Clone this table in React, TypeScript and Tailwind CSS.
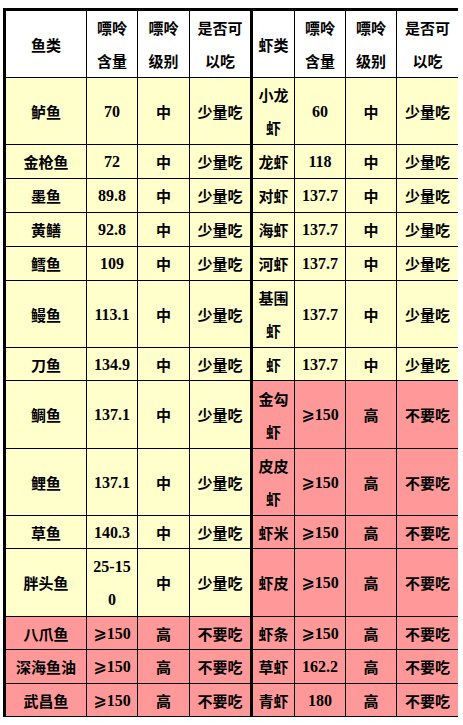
import React from 'react';

type Side = {
  name: string;
  value: string;
  level: string;
  eat: string;
  bad?: boolean;
};

type Row = {
  h: string;
  fish: Side;
  shrimp: Side;
};

const ok = (name: string, value: string): Side => ({ name, value, level: '中', eat: '少量吃' });
const no = (name: string, value: string): Side => ({ name, value, level: '高', eat: '不要吃', bad: true });

const rows: Row[] = [
  { h: 'h-[67px]', fish: ok('鲈鱼', '70'), shrimp: ok('小龙\n虾', '60') },
  { h: 'h-[34px]', fish: ok('金枪鱼', '72'), shrimp: ok('龙虾', '118') },
  { h: 'h-[34px]', fish: ok('墨鱼', '89.8'), shrimp: ok('对虾', '137.7') },
  { h: 'h-[34px]', fish: ok('黄鳝', '92.8'), shrimp: ok('海虾', '137.7') },
  { h: 'h-[34px]', fish: ok('鳕鱼', '109'), shrimp: ok('河虾', '137.7') },
  { h: 'h-[67px]', fish: ok('鳗鱼', '113.1'), shrimp: ok('基围\n虾', '137.7') },
  { h: 'h-[33px]', fish: ok('刀鱼', '134.9'), shrimp: ok('虾', '137.7') },
  { h: 'h-[68px]', fish: ok('鲷鱼', '137.1'), shrimp: no('金勾\n虾', '⩾150') },
  { h: 'h-[67px]', fish: ok('鲤鱼', '137.1'), shrimp: no('皮皮\n虾', '⩾150') },
  { h: 'h-[33px]', fish: ok('草鱼', '140.3'), shrimp: no('虾米', '⩾150') },
  { h: 'h-[68px]', fish: ok('胖头鱼', '25-15\n0'), shrimp: no('虾皮', '⩾150') },
  { h: 'h-[33px]', fish: no('八爪鱼', '⩾150'), shrimp: no('虾条', '⩾150') },
  { h: 'h-[34px]', fish: no('深海鱼油', '⩾150'), shrimp: no('草虾', '162.2') },
  { h: 'h-[33px]', fish: no('武昌鱼', '⩾150'), shrimp: no('青虾', '180') },
];

const numFont = { fontFamily: '"Liberation Serif", "DejaVu Sans", "Noto Sans CJK SC", serif' };

const Cell = ({
  text,
  w,
  bg,
  thick,
  last,
  num,
}: {
  text: string;
  w: string;
  bg: string;
  thick?: boolean;
  last?: boolean;
  num?: boolean;
}) => (
  <div
    className={`${w} ${bg} ${thick ? 'border-r-[3px]' : last ? 'border-r-0' : 'border-r'} ${num ? 'text-[16px]' : ''} border-b border-black flex items-center justify-center text-center whitespace-pre-line leading-[33px]`}
    style={num ? numFont : undefined}
  >
    {text}
  </div>
);

const widths = ['w-[81px]', 'w-[51px]', 'w-[52px]', 'w-[63px]', 'w-[42px]', 'w-[51px]', 'w-[51px]', 'w-[61px]'];

export default function App() {
  return (
    <div
      className="w-[463px] h-[725px] bg-white pt-[8px] pl-[3px] text-[15px] font-bold text-black"
      style={{ fontFamily: '"Noto Sans CJK SC", "Noto Sans", sans-serif' }}
    >
      <div className="w-fit border-l-[3px] border-t-[3px] border-black">
        <div className="flex h-[67px]">
          {['鱼类', '嘌呤\n含量', '嘌呤\n级别', '是否可\n以吃', '虾类', '嘌呤\n含量', '嘌呤\n级别', '是否可\n以吃'].map((t, i) => (
            <Cell key={i} text={t} w={widths[i]} bg="bg-white" thick={i === 3} last={i === 7} />
          ))}
        </div>
        {rows.map((r, idx) => {
          const fb = r.fish.bad ? 'bg-[#ff9999]' : 'bg-[#ffffcc]';
          const sb = r.shrimp.bad ? 'bg-[#ff9999]' : 'bg-[#ffffcc]';
          return (
            <div key={idx} className={`flex ${r.h}`}>
              <Cell text={r.fish.name} w={widths[0]} bg={fb} />
              <Cell text={r.fish.value} w={widths[1]} bg={fb} num />
              <Cell text={r.fish.level} w={widths[2]} bg={fb} />
              <Cell text={r.fish.eat} w={widths[3]} bg={fb} thick />
              <Cell text={r.shrimp.name} w={widths[4]} bg={sb} />
              <Cell text={r.shrimp.value} w={widths[5]} bg={sb} num />
              <Cell text={r.shrimp.level} w={widths[6]} bg={sb} />
              <Cell text={r.shrimp.eat} w={widths[7]} bg={sb} last />
            </div>
          );
        })}
      </div>
    </div>
  );
}
